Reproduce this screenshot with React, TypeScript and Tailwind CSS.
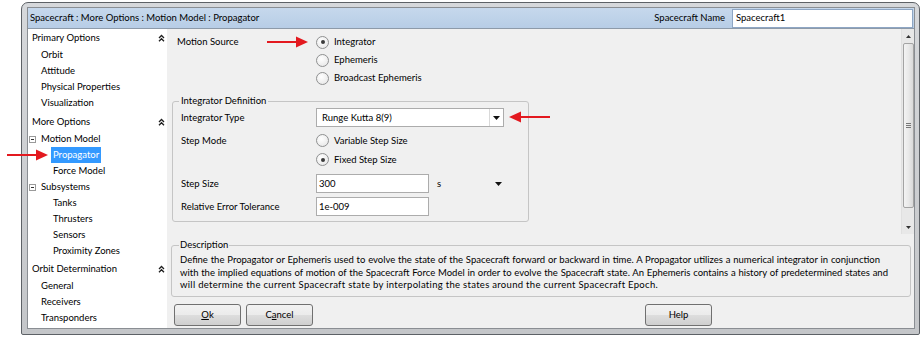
import React from "react";

const RED = "#e3191f";

const ArrowRight = () => (
  <svg width="41" height="12" viewBox="0 0 41 12">
    <line x1="0" y1="6" x2="31" y2="6" stroke={RED} strokeWidth="2" />
    <polygon points="29,0.5 41,6 29,11.5" fill={RED} />
  </svg>
);

const ArrowLeft = () => (
  <svg width="41" height="12" viewBox="0 0 41 12">
    <line x1="10" y1="6" x2="41" y2="6" stroke={RED} strokeWidth="2" />
    <polygon points="12,0.5 0,6 12,11.5" fill={RED} />
  </svg>
);

const Chevrons = () => (
  <svg width="7" height="8" viewBox="0 0 7 8">
    <path d="M1 4 L3.5 1.5 L6 4 M1 7.2 L3.5 4.7 L6 7.2" fill="none" stroke="#1e1e1e" strokeWidth="1.3" />
  </svg>
);

const MinusBox = () => (
  <span className="w-[7px] h-[7px] border border-[#9a9a9a] bg-white flex items-center justify-center">
    <span className="w-[3px] h-px bg-[#333]" />
  </span>
);

const Caret = () => (
  <svg width="7" height="4" viewBox="0 0 7 4">
    <polygon points="0,0 7,0 3.5,4" fill="#111" />
  </svg>
);

const Radio = ({ label, checked }: { label: string; checked?: boolean }) => (
  <div className="h-[18px] flex items-center">
    <span className="w-[13px] h-[13px] rounded-full border border-[#8f9091] bg-[radial-gradient(circle_at_40%_35%,#ffffff,#e3e3e3)] flex items-center justify-center">
      {checked && <span className="w-[4px] h-[4px] rounded-full bg-[#3a3a3a]" />}
    </span>
    <span className="ml-[5px]">{label}</span>
  </div>
);

const TreeHeader = ({ label, className }: { label: string; className?: string }) => (
  <div className={"h-[18px] flex items-center justify-between pl-[4px] pr-[2px] " + (className ?? "")}>
    <span>{label}</span>
    <Chevrons />
  </div>
);

const TreeItem = ({ label, className }: { label: string; className?: string }) => (
  <div className={"h-[16px] flex items-center " + (className ?? "pl-[13px]")}>{label}</div>
);

const Button = ({ children, className }: { children: React.ReactNode; className?: string }) => (
  <div
    className={
      "w-[67px] h-[22px] rounded-[3px] border border-[#707070] bg-[linear-gradient(#f2f2f2,#ebebeb_50%,#dddddd_51%,#cfcfcf)] flex items-center justify-center " +
      (className ?? "")
    }
  >
    {children}
  </div>
);

export default function App() {
  return (
    <div className="relative w-[920px] h-[337px] overflow-hidden bg-white pl-[21px] pt-[2px] font-['Lato',sans-serif] text-[9.5px] leading-[12px] text-black">
      {/* window frame */}
      <div className="w-[899px] h-[333px] rounded-t-[7px] rounded-b-[2px] border border-[#5d6166] bg-[linear-gradient(#d6d8db,#c4c6c9)] pt-[4px] pl-[5px] pr-[4px] pb-[5px]">
        <div className="h-full border border-[#8a8e93] flex flex-col">
          {/* title bar */}
          <div className="h-[21px] shrink-0 border-b border-[#8d9aa9] bg-[linear-gradient(#c6d8ec,#b7cde6)] flex items-center pl-[2px]">
            <span>Spacecraft : More Options : Motion Model : Propagator</span>
            <span className="ml-auto mr-[7px]">Spacecraft Name</span>
            <div className="w-[181px] h-[19px] border border-[#8ea6c4] bg-white flex items-center pl-[3px] mr-px">
              Spacecraft1
            </div>
          </div>

          <div className="flex-1 flex min-h-0">
            {/* left tree */}
            <div className="w-[139px] shrink-0 bg-white">
              <TreeHeader label="Primary Options" />
              <TreeItem label="Orbit" />
              <TreeItem label="Attitude" />
              <TreeItem label="Physical Properties" />
              <TreeItem label="Visualization" />
              <TreeHeader label="More Options" className="mt-[2px]" />
              <div className="h-[16px] flex items-center pl-px">
                <MinusBox />
                <span className="ml-[5px]">Motion Model</span>
              </div>
              <div className="h-[16px] flex items-center pl-[23px]">
                <span className="h-[16px] px-[2px] flex items-center bg-[#3399ff] text-white">Propagator</span>
              </div>
              <TreeItem label="Force Model" className="pl-[25px]" />
              <div className="h-[16px] flex items-center pl-px">
                <MinusBox />
                <span className="ml-[5px]">Subsystems</span>
              </div>
              <TreeItem label="Tanks" className="pl-[25px]" />
              <TreeItem label="Thrusters" className="pl-[25px]" />
              <TreeItem label="Sensors" className="pl-[25px]" />
              <TreeItem label="Proximity Zones" className="pl-[25px]" />
              <TreeHeader label="Orbit Determination" className="mt-px" />
              <TreeItem label="General" />
              <TreeItem label="Receivers" />
              <TreeItem label="Transponders" />
            </div>

            {/* right content */}
            <div className="w-[747px] min-w-0 bg-[#f0f0f0] flex flex-col">
              <div className="h-[205px] shrink-0 flex">
                <div className="flex-1 min-w-0 pt-[4px] pl-[5px]">
                  <div className="flex pl-[5px]">
                    <div className="w-[139px] h-[18px] flex items-center">Motion Source</div>
                    <div>
                      <Radio label="Integrator" checked />
                      <Radio label="Ephemeris" />
                      <Radio label="Broadcast Ephemeris" />
                    </div>
                  </div>

                  <fieldset className="mt-[8px] w-[357px] min-w-0 rounded-[3px] border border-[#c5c5c5] px-[8px] pb-[5px]">
                    <legend className="-ml-[2px] px-[2px] leading-[12px]">Integrator Definition</legend>
                    <div className="mt-px flex items-center h-[19px]">
                      <span className="w-[135px]">Integrator Type</span>
                      <div className="w-[188px] h-[19px] border border-[#acacac] bg-white flex items-center">
                        <span className="flex-1 pl-[5px]">Runge Kutta 8(9)</span>
                        <span className="w-[14px] h-full border-l border-[#d9d9d9] flex items-center justify-center">
                          <Caret />
                        </span>
                      </div>
                    </div>
                    <div className="mt-[4px] flex">
                      <span className="w-[135px] h-[19px] flex items-center">Step Mode</span>
                      <div className="flex flex-col">
                        <div className="h-[19px] flex items-center">
                          <Radio label="Variable Step Size" />
                        </div>
                        <div className="h-[19px] flex items-center">
                          <Radio label="Fixed Step Size" checked />
                        </div>
                      </div>
                    </div>
                    <div className="mt-[5px] flex items-center h-[19px]">
                      <span className="w-[135px]">Step Size</span>
                      <div className="w-[113px] h-[19px] border border-[#acacac] bg-white flex items-center pl-[2px]">300</div>
                      <span className="ml-[8px]">s</span>
                      <span className="ml-[54px] flex items-center">
                        <Caret />
                      </span>
                    </div>
                    <div className="mt-[4px] flex items-center h-[19px]">
                      <span className="w-[135px]">Relative Error Tolerance</span>
                      <div className="w-[113px] h-[19px] border border-[#acacac] bg-white flex items-center pl-[2px]">1e-009</div>
                    </div>
                  </fieldset>
                </div>

                {/* scrollbar */}
                <div className="w-[13px] shrink-0 bg-[#e8e8e8] border-l border-[#e0e0e0] flex flex-col items-center">
                  <div className="h-[14px] flex items-center justify-center">
                    <svg width="5" height="3" viewBox="0 0 5 3">
                      <polygon points="0,3 5,3 2.5,0" fill="#333" />
                    </svg>
                  </div>
                  <div className="w-[11px] h-[165px] rounded-[2px] border border-[#a3a3a3] bg-[linear-gradient(90deg,#f3f3f3,#e9e9e9_50%,#d9d9d9)] flex flex-col items-center justify-center gap-px">
                    <span className="w-[5px] h-px bg-[#777]" />
                    <span className="w-[5px] h-px bg-[#777]" />
                    <span className="w-[5px] h-px bg-[#777]" />
                  </div>
                  <div className="flex-1" />
                  <div className="h-[14px] flex items-center justify-center">
                    <svg width="5" height="3" viewBox="0 0 5 3">
                      <polygon points="0,0 5,0 2.5,3" fill="#333" />
                    </svg>
                  </div>
                </div>
              </div>

              <fieldset className="mt-[5px] ml-[4px] w-[740px] min-w-0 h-[58px] overflow-hidden rounded-[3px] border border-[#c5c5c5] px-[8px]">
                <legend className="-ml-px px-px leading-[12px]">Description</legend>
                <div className="pt-[3px] leading-[12.5px]">
                  <p className="w-[700px] text-justify [text-align-last:justify]">
                    Define the Propagator or Ephemeris used to evolve the state of the Spacecraft forward or backward in time. A Propagator utilizes a numerical integrator in conjunction
                  </p>
                  <p className="w-[708px] text-justify [text-align-last:justify]">
                    with the implied equations of motion of the Spacecraft Force Model in order to evolve the Spacecraft state. An Ephemeris contains a history of predetermined states and
                  </p>
                  <p className="whitespace-nowrap tracking-[0.3px]">
                    will determine the current Spacecraft state by interpolating the states around the current Spacecraft Epoch.
                  </p>
                </div>
              </fieldset>

              <div className="mt-[7px] flex pl-[7px]">
                <Button>
                  <span className="underline underline-offset-1">O</span>k
                </Button>
                <Button className="ml-[5px]">
                  C<span className="underline underline-offset-1">a</span>ncel
                </Button>
                <Button className="ml-[332px]">Help</Button>
              </div>
            </div>
          </div>
        </div>
      </div>

      {/* annotation arrows */}
      <div className="absolute left-[267px] top-[36px]">
        <ArrowRight />
      </div>
      <div className="absolute left-[509px] top-[111px]">
        <ArrowLeft />
      </div>
      <div className="absolute left-[7px] top-[149px]">
        <ArrowRight />
      </div>
    </div>
  );
}
